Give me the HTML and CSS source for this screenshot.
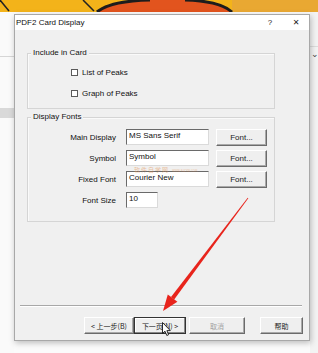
FILE: index.html
```html
<!DOCTYPE html>
<html lang="en">
<head>
    <meta charset="UTF-8">
    <title>PDF2 Card Display</title>
    <link rel="stylesheet" href="styles.css">
</head>
<body>
<div class="desktop">
    <!-- sfondo dietro la finestra -->
    <div class="banner">
        <svg width="318" height="12" viewBox="0 0 318 12">
            <rect x="0" y="0" width="318" height="12" fill="#f3b31a"/>
            <rect x="232" y="0" width="86" height="12" fill="#e9a832"/>
            <path d="M0 0 L9 11" stroke="#222" stroke-width="1.5"/>
            <path d="M83 0 L94 11" stroke="#222" stroke-width="1.5"/>
            <path d="M97 12 Q110 1 150 0 L185 0 Q220 1 232 12 Z" fill="#e2541e"/>
            <path d="M97 12 Q110 1 150 0 M185 0 Q220 1 232 12" stroke="#1d1d1d" stroke-width="3" fill="none"/>
        </svg>
    </div>
    <div class="backdrop">
        <div class="side-left">
            <span class="rule"></span>
            <span class="band"></span>
        </div>
        <div class="side-right">
            <span class="rule"></span>
            <span class="chev">&#x2304;</span>
        </div>
    </div>

    <!-- Finestra di dialogo -->
    <div class="dialog">
        <div class="titlebar">
            <span class="title">PDF2 Card Display</span>
            <span class="help">?</span>
            <span class="close">&#x2715;</span>
        </div>
        <div class="content">
            <div class="group group-include">
                <div class="legend">Include in Card</div>
                <div class="check"><span class="box"></span>List of Peaks</div>
                <div class="check"><span class="box"></span>Graph of Peaks</div>
            </div>

            <div class="group group-fonts">
                <div class="legend">Display Fonts</div>
                <div class="rows">
                    <div class="row">
                        <span class="lbl">Main Display</span>
                        <span class="field">MS Sans Serif</span>
                        <span class="btn">Font...</span>
                    </div>
                    <div class="row">
                        <span class="lbl">Symbol</span>
                        <span class="field">Symbol</span>
                        <span class="btn">Font...</span>
                    </div>
                    <div class="row">
                        <span class="lbl">Fixed Font</span>
                        <span class="field">Courier New</span>
                        <span class="btn">Font...</span>
                    </div>
                    <div class="row">
                        <span class="lbl">Font Size</span>
                        <span class="field field-small">10</span>
                    </div>
                </div>
            </div>

            <div class="separator"></div>

            <div class="footer">
                <span class="btn btn-back">&lt; 上一步(B)</span>
                <span class="btn btn-next">下一页(N) &gt;</span>
                <span class="btn btn-cancel">取消</span>
                <span class="btn btn-help">帮助</span>
            </div>
        </div>
    </div>

    <!-- filigrana -->
    <div class="watermark">软件自学网<small>WWW.RJZXW.COM</small></div>

    <!-- freccia rossa -->
    <svg class="arrow" width="318" height="353" viewBox="0 0 318 353">
        <polygon points="248.3,198.2 247.7,197.8 171,297 174.2,299.4" fill="#e8241c"/>
        <polygon points="163,311 167.8,294.6 177.4,301.8" fill="#e8241c"/>
    </svg>

    <!-- puntatore -->
    <svg class="cursor" width="10" height="15" viewBox="0 0 10 15">
        <path d="M0.5 0.5 L0.5 11.5 L3 9.2 L4.8 13.5 L6.6 12.7 L4.9 8.6 L8.3 8.6 Z" fill="#fff" stroke="#111" stroke-width="0.9" stroke-linejoin="round"/>
    </svg>
</div>
</body>
</html>
```

FILE: styles.css
```css
body {
    margin: 0;
    font-family: "Liberation Sans", "Noto Sans CJK SC", sans-serif;
    font-size: 8px;
    color: #111;
    background: #fbfbfb;
}

.desktop {
    position: relative;
    width: 318px;
    height: 353px;
    overflow: hidden;
}

.banner {
    height: 12px;
}

.banner svg {
    display: block;
}

.backdrop {
    display: flex;
    justify-content: space-between;
    height: 341px;
}

.side-left {
    width: 14px;
    display: flex;
    flex-direction: column;
    background: #fafafa;
}

.side-left .rule {
    margin-top: 44px;
    height: 1px;
    background: #d6d6d6;
}

.side-left .band {
    margin-top: 51px;
    height: 10px;
    background: #d9d9d9;
}

.side-right {
    width: 8px;
    display: flex;
    flex-direction: column;
    background: #f3f3f3;
}

.side-right .rule {
    margin-top: 34px;
    height: 1px;
    background: #dcdcdc;
}

.side-right .chev {
    margin-top: 2px;
    padding-left: 1px;
    font-family: "DejaVu Sans", sans-serif;
    font-size: 9px;
    line-height: 10px;
    color: #444;
}

/* Finestra */
.dialog {
    position: absolute;
    left: 14px;
    top: 14px;
    width: 296px;
    height: 327px;
    box-sizing: border-box;
    border: 1px solid #a8a8a8;
    background: #f0f0f0;
    box-shadow: 1px 2px 6px rgba(0, 0, 0, 0.25);
    display: flex;
    flex-direction: column;
}

.titlebar {
    height: 15px;
    background: #ffffff;
    display: flex;
    align-items: center;
    flex-shrink: 0;
}

.title {
    padding-left: 1px;
    flex: 1;
    font-size: 8px;
    color: #111;
}

.help {
    width: 10px;
    text-align: center;
    font-size: 8px;
    color: #222;
}

.close {
    width: 10px;
    margin-left: 16px;
    margin-right: 8px;
    text-align: center;
    font-family: "DejaVu Sans", sans-serif;
    font-size: 8px;
    color: #222;
}

.content {
    display: flex;
    flex-direction: column;
    padding-left: 12px;
}

.group {
    width: 248px;
    box-sizing: border-box;
    border: 1px solid #d5d5d5;
    box-shadow: inset 1px 1px 0 #fafafa;
}

.legend {
    width: fit-content;
    margin: -6px 0 0 3px;
    padding: 0 2px;
    height: 10px;
    line-height: 10px;
    background: #f0f0f0;
}

.group-include {
    margin-top: 23px;
    height: 56px;
}

.check {
    display: flex;
    align-items: center;
    height: 10px;
    padding-left: 43px;
    margin-top: 9px;
}

.check + .check {
    margin-top: 11px;
}

.box {
    width: 5px;
    height: 5px;
    border: 1px solid #5a5a5a;
    background: #fff;
    margin-right: 4px;
}

.group-fonts {
    margin-top: 8px;
    height: 105px;
}

.rows {
    display: flex;
    flex-direction: column;
    gap: 5px;
    margin-top: 7px;
}

.row {
    display: flex;
    align-items: center;
    height: 16px;
}

.lbl {
    width: 88px;
    text-align: right;
    margin-right: 10px;
}

.field {
    width: 83px;
    height: 16px;
    box-sizing: border-box;
    border: 1px solid;
    border-color: #6a6a6a #dadada #dadada #6a6a6a;
    background: #fff;
    padding: 1px 2px;
    line-height: 9px;
    margin-right: 7px;
}

.field-small {
    width: 32px;
}

.btn {
    display: flex;
    align-items: center;
    justify-content: center;
    width: 51px;
    height: 17px;
    box-sizing: border-box;
    border: 1px solid;
    border-color: #ffffff #6b6b6b #6b6b6b #ffffff;
    box-shadow: inset -1px -1px 0 #a9a9a9;
    background: #efefef;
    color: #222;
}

.separator {
    margin: 83px 0 0 -7px;
    width: 282px;
    height: 1px;
    background: #a8a8a8;
    border-bottom: 1px solid #ffffff;
}

.footer {
    display: flex;
    margin-top: 10px;
    padding-left: 57px;
    font-family: "Noto Sans CJK SC", "Liberation Sans", sans-serif;
    font-size: 7px;
}

.btn-back {
    width: 50px;
}

.btn-next {
    width: 52px;
    border-color: #333;
    box-shadow: inset -1px -1px 0 #888, inset 1px 1px 0 #fff;
}

.btn-cancel {
    width: 56px;
    margin-left: 3px;
    color: #a3a3a3;
}

.btn-help {
    width: 43px;
    margin-left: 15px;
}

.watermark {
    position: absolute;
    left: 134px;
    top: 167px;
    font-family: "Noto Sans CJK SC", sans-serif;
    font-size: 6px;
    line-height: 6px;
    color: rgba(226, 140, 70, 0.5);
    display: flex;
    align-items: flex-end;
    gap: 3px;
    letter-spacing: 1px;
}

.watermark small {
    font-size: 3px;
    line-height: 4px;
    letter-spacing: 0;
}

.arrow {
    position: absolute;
    left: 0;
    top: 0;
    pointer-events: none;
}

.cursor {
    position: absolute;
    left: 162px;
    top: 322px;
}
```
